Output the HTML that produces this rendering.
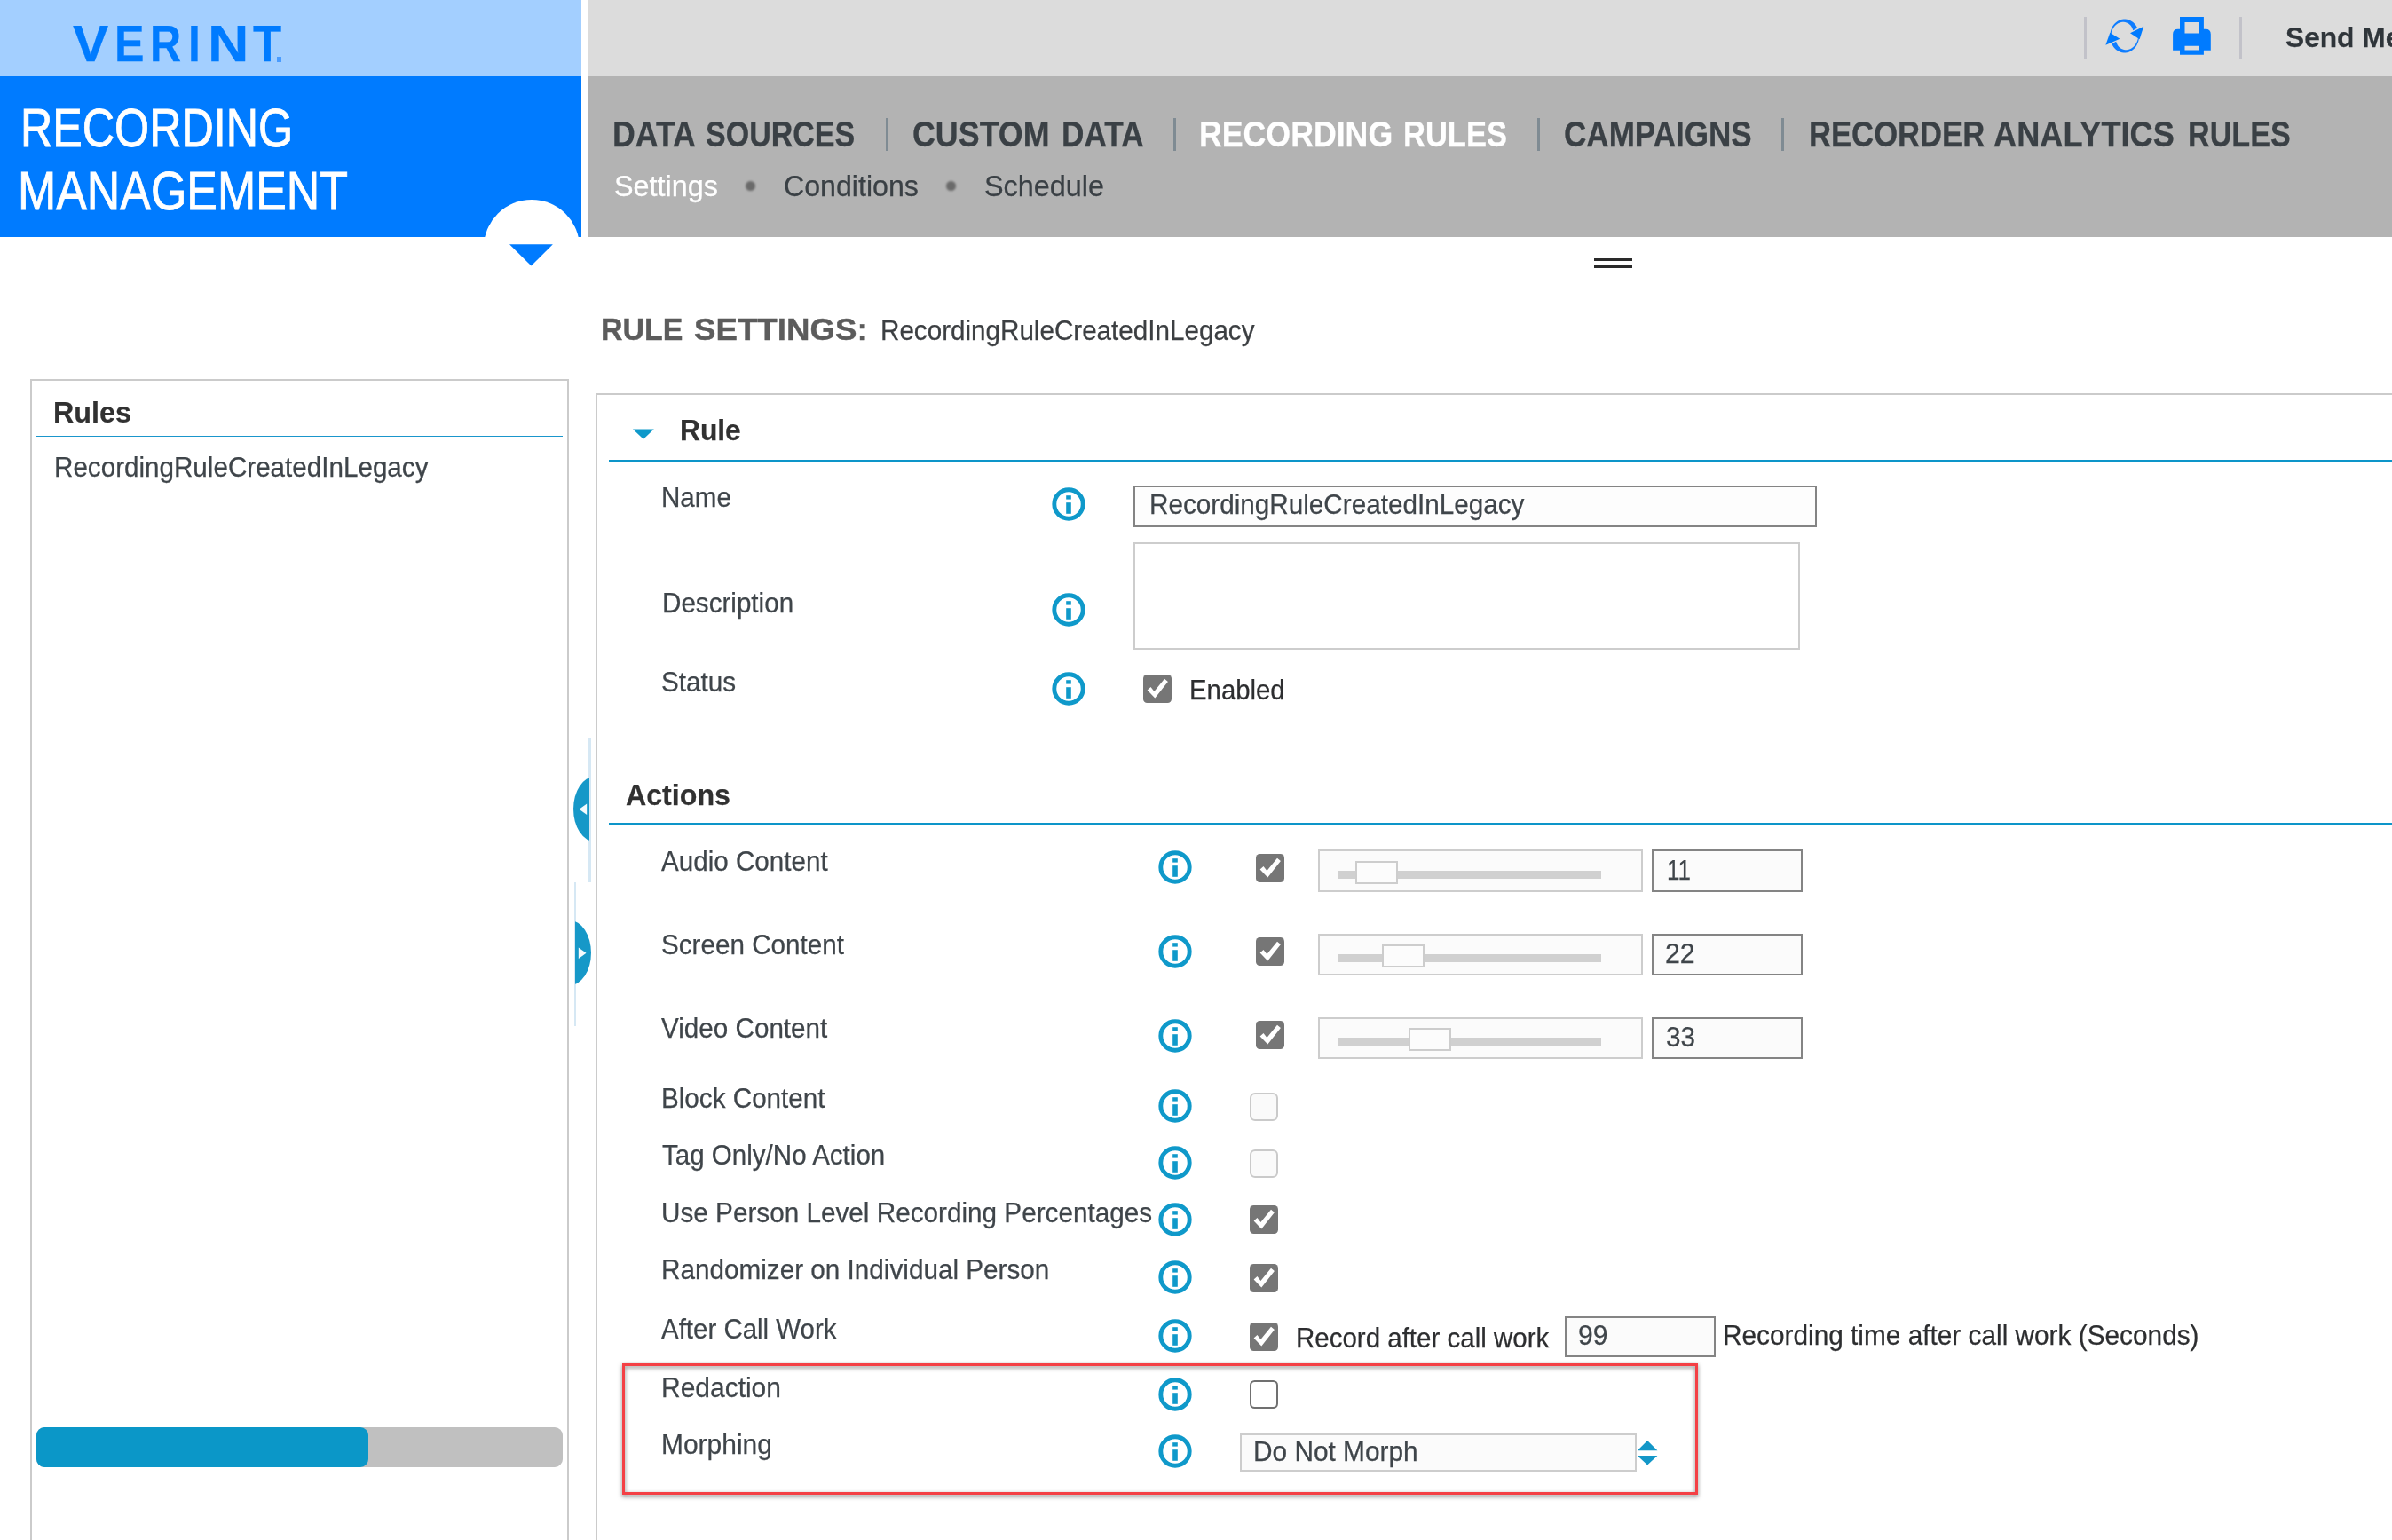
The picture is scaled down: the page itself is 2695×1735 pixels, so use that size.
<!DOCTYPE html>
<html lang="en">
<head>
<meta charset="utf-8">
<title>Recording Management - Recording Rules</title>
<style>
html,body{margin:0;padding:0;background:#fff;}
html{overflow:hidden;width:2695px;height:1735px;}
body{width:2695px;height:1735px;position:relative;overflow:hidden;font-family:"Liberation Sans",sans-serif;}
.a{position:absolute;}
.t{position:absolute;white-space:nowrap;transform-origin:0 0;-webkit-text-stroke:0.25px currentColor;}
.ln{position:absolute;background:#0d95c9;height:2.3px;}
.cb{position:absolute;width:32px;height:32px;border-radius:4.5px;background:#767676;}
.cb svg{position:absolute;left:0;top:0;}
.cbd{position:absolute;width:32px;height:32px;box-sizing:border-box;border:2px solid #cacaca;border-radius:6px;background:#fafafa;}
.cbe{position:absolute;width:32px;height:32px;box-sizing:border-box;border:2px solid #707070;border-radius:5.5px;background:#fff;}
.inp{position:absolute;box-sizing:border-box;border:2px solid #848484;background:#fbfbfb;}
.sl{position:absolute;box-sizing:border-box;border:2px solid #cdcdcd;background:#fbfbfb;}
.trk{position:absolute;background:#d0d0d0;height:8.9px;}
.th{position:absolute;box-sizing:border-box;width:47.8px;height:25.9px;border:2px solid #cdcdcd;background:#fcfcfc;}
.ii{position:absolute;width:38px;height:38px;filter:blur(.35px);}
</style>
</head>
<body>
<div id="app" style="position:absolute;left:0;top:0;width:2695px;height:1735px;overflow:hidden;contain:paint">


<!-- header: logo strip + module title -->
<div class="a" style="left:0;top:0;width:655px;height:86px;background:#a3cfff"></div>
<div class="a" style="left:0;top:86px;width:655px;height:181px;background:#007bff;overflow:hidden">
  <div class="a" style="left:544.7px;top:139px;width:108px;height:108px;border-radius:50%;background:#fff"></div>
</div>
<div class="a" style="left:311.8px;top:64.2px;width:5.7px;height:5.6px;background:#4a9cff"></div>
<svg class="a" style="left:570px;top:270px" width="60" height="36" viewBox="0 0 60 36"><path d="M4 5.3 L52.9 5.3 L28.5 29.5 Z" fill="#007bff"/></svg>

<!-- top utility bar -->
<div class="a" style="left:663px;top:0;width:2032px;height:86px;background:#dcdcdc"></div>
<div class="a" style="left:2347.5px;top:19px;width:3px;height:48px;background:#c2c2c9"></div>
<div class="a" style="left:2522.5px;top:19px;width:3px;height:48px;background:#c2c2c9"></div>
<!-- refresh icon -->
<svg class="a" style="left:2370px;top:17px;filter:blur(.55px)" width="48" height="48" viewBox="0 0 48 48">
  <path d="M7.4 25.2 L7.3 23.0 L7.5 20.8 L7.8 18.7 L8.4 16.6 L9.2 14.7 L10.1 12.8 L11.3 11.1 L12.6 9.5 L14.0 8.2 L15.6 7.0 L17.3 6.0 L19.0 5.3 L20.9 4.8 L22.7 4.5 L24.6 4.5 L26.5 4.8 L28.3 5.3 L30.0 6.0 L31.7 6.9 L33.3 8.1 L34.8 9.5 L36.1 11.0 L37.2 12.7 L38.2 14.6 L33.2 17.2 L32.8 15.8 L32.2 14.4 L31.5 13.0 L30.6 11.8 L29.6 10.7 L28.4 9.8 L27.2 9.0 L25.8 8.4 L24.4 8.0 L22.9 7.8 L21.4 7.8 L19.8 8.0 L18.3 8.4 L16.8 9.1 L15.3 9.9 L14.0 11.0 L12.7 12.3 L11.5 13.7 L10.5 15.4 L9.7 17.1 L9.0 19.0 L8.5 21.0 L8.3 23.0 L8.3 25.1 Z" fill="#0f7dff"/>
  <path d="M40.0 21.8 L40.1 24.0 L39.9 26.2 L39.6 28.3 L39.0 30.4 L38.2 32.3 L37.3 34.2 L36.1 35.9 L34.8 37.5 L33.4 38.8 L31.8 40.0 L30.1 41.0 L28.4 41.7 L26.5 42.2 L24.7 42.5 L22.8 42.5 L20.9 42.2 L19.1 41.7 L17.4 41.0 L15.7 40.1 L14.1 38.9 L12.6 37.5 L11.3 36.0 L10.2 34.3 L9.2 32.4 L14.2 29.8 L14.6 31.2 L15.2 32.6 L15.9 34.0 L16.8 35.2 L17.8 36.3 L19.0 37.2 L20.2 38.0 L21.6 38.6 L23.0 39.0 L24.5 39.2 L26.0 39.2 L27.6 39.0 L29.1 38.6 L30.6 37.9 L32.1 37.1 L33.4 36.0 L34.7 34.7 L35.9 33.3 L36.9 31.6 L37.7 29.9 L38.4 28.0 L38.9 26.0 L39.1 24.0 L39.1 21.9 Z" fill="#0f7dff"/>
  <path d="M30 20.3 L45.2 12.8 L40.6 27.2 Z" fill="#007bff"/>
  <path d="M18.4 26.7 L2.4 33.8 L7.3 19.8 Z" fill="#007bff"/>
</svg>
<!-- print icon -->
<svg class="a" style="left:2446px;top:17px" width="48" height="48" viewBox="0 0 48 48">
  <path fill="#007bff" fill-rule="evenodd" d="M10 2.1 H36.9 V15.8 H39 Q44.8 15.8 44.8 21.6 V39.8 H36.9 V44.8 H10 V39.8 H2.1 V21.6 Q2.1 15.8 7.9 15.8 H10 Z M15.5 7.9 V20.5 H31.3 V7.9 Z M15.5 34.8 V39.5 H31.3 V34.8 Z"/>
</svg>

<!-- navigation band -->
<div class="a" style="left:663px;top:86px;width:2032px;height:181px;background:#b3b3b3"></div>
<div class="a" style="left:998px;top:132.5px;width:3px;height:37px;background:#7f8b93"></div>
<div class="a" style="left:1322px;top:132.5px;width:3px;height:37px;background:#7f8b93"></div>
<div class="a" style="left:1732px;top:132.5px;width:3px;height:37px;background:#7f8b93"></div>
<div class="a" style="left:2007px;top:132.5px;width:3px;height:37px;background:#7f8b93"></div>
<div class="a" style="left:840px;top:204px;width:10.5px;height:10.5px;border-radius:50%;background:#6a6a6a;filter:blur(.8px)"></div>
<div class="a" style="left:1066px;top:204px;width:10.5px;height:10.5px;border-radius:50%;background:#6a6a6a;filter:blur(.8px)"></div>

<!-- collapse grip -->
<div class="a" style="left:1796px;top:291px;width:43px;height:3px;background:#2a2a2a"></div>
<div class="a" style="left:1796px;top:299px;width:43px;height:3px;background:#2a2a2a"></div>

<!-- left rules panel -->
<div class="a" style="left:34px;top:427px;width:607px;height:1400px;box-sizing:border-box;border:2px solid #cbcbcb;background:#fff"></div>
<div class="ln" style="left:41px;top:490.6px;width:593px;height:1.6px;background:#1a96cc"></div>
<div class="a" style="left:41px;top:1608.2px;width:593px;height:44.5px;border-radius:9px;background:#c0c0c0"></div>
<div class="a" style="left:41px;top:1608.2px;width:374px;height:44.5px;border-radius:9px;background:#0b97c8"></div>

<!-- splitter handles -->
<div class="a" style="left:663.2px;top:832px;width:2.4px;height:162px;background:#d6e8f4"></div>
<div class="a" style="left:646.4px;top:876.2px;width:17.8px;height:71px;overflow:hidden"><div class="a" style="left:0;top:-0.9px;width:48px;height:72.8px;border-radius:50%;background:#1698c8"></div></div>
<svg class="a" style="left:651px;top:904px" width="12" height="16" viewBox="0 0 12 16"><path d="M10.2 1.5 L10.2 14 L1.5 7.8 Z" fill="#f4fafd"/></svg>
<div class="a" style="left:646.7px;top:993.8px;width:2.4px;height:162px;background:#d6e8f4"></div>
<div class="a" style="left:648.2px;top:1038px;width:18.2px;height:71px;overflow:hidden"><div class="a" style="right:0;top:-0.9px;width:48px;height:72.8px;border-radius:50%;background:#1698c8"></div></div>
<svg class="a" style="left:649.5px;top:1066px" width="12" height="16" viewBox="0 0 12 16"><path d="M1.8 1.5 L1.8 14 L10.5 7.8 Z" fill="#f4fafd"/></svg>

<!-- main settings panel -->
<div class="a" style="left:671px;top:442.6px;width:2200px;height:1400px;box-sizing:border-box;border:2px solid #cbcbcb;background:#fff"></div>
<svg class="a" style="left:711px;top:480px" width="30" height="20" viewBox="0 0 30 20"><path d="M2 3.4 L25.8 3.4 L13.9 14.8 Z" fill="#0f99ca"/></svg>
<div class="ln" style="left:686px;top:517.8px;width:2020px;height:2.2px"></div>
<div class="ln" style="left:686px;top:926.8px;width:2020px;height:2.3px"></div>

<!-- rule section controls -->
<div class="inp" style="left:1277.3px;top:547.2px;width:769.6px;height:46.8px;background:#fdfdfd"></div>
<div class="a" style="left:1277.3px;top:611px;width:750.7px;height:121px;box-sizing:border-box;border:2px solid #cdcdcd;background:#fff"></div>
<div class="cb" style="left:1288.1px;top:760px"><svg width="32" height="32" viewBox="0 0 32 32"><path d="M4.6 17.6 L8.5 14 L12.4 19 L24 4.8 L27.9 8.1 L13.3 26.5 Z" fill="#fff"/></svg></div>

<!-- action rows: sliders -->
<div class="cb" style="left:1415px;top:962.1px"><svg width="32" height="32" viewBox="0 0 32 32"><path d="M4.6 17.6 L8.5 14 L12.4 19 L24 4.8 L27.9 8.1 L13.3 26.5 Z" fill="#fff"/></svg></div>
<div class="sl" style="left:1485.1px;top:957.0px;width:365.6px;height:47.85px"></div>
<div class="trk" style="left:1508.1px;top:981.1px;width:295.6px"></div>
<div class="th" style="left:1527.1px;top:970.1px"></div>
<div class="inp" style="left:1861.1px;top:957.0px;width:169.8px;height:47.85px"></div>

<div class="cb" style="left:1415px;top:1056.2px"><svg width="32" height="32" viewBox="0 0 32 32"><path d="M4.6 17.6 L8.5 14 L12.4 19 L24 4.8 L27.9 8.1 L13.3 26.5 Z" fill="#fff"/></svg></div>
<div class="sl" style="left:1485.1px;top:1052.0px;width:365.6px;height:46.90px"></div>
<div class="trk" style="left:1508.1px;top:1075.1px;width:295.6px"></div>
<div class="th" style="left:1556.9px;top:1064.1px"></div>
<div class="inp" style="left:1861.1px;top:1052.0px;width:169.8px;height:46.90px"></div>

<div class="cb" style="left:1415px;top:1150.3px"><svg width="32" height="32" viewBox="0 0 32 32"><path d="M4.6 17.6 L8.5 14 L12.4 19 L24 4.8 L27.9 8.1 L13.3 26.5 Z" fill="#fff"/></svg></div>
<div class="sl" style="left:1485.1px;top:1146.0px;width:365.6px;height:46.90px"></div>
<div class="trk" style="left:1508.1px;top:1169.3px;width:295.6px"></div>
<div class="th" style="left:1587.0px;top:1158.3px"></div>
<div class="inp" style="left:1861.1px;top:1146.0px;width:169.8px;height:46.90px"></div>

<!-- action rows: checkboxes -->
<div class="cbd" style="left:1408.2px;top:1231.1px"></div>
<div class="cbd" style="left:1408.2px;top:1295.1px"></div>
<div class="cb" style="left:1408.2px;top:1358px"><svg width="32" height="32" viewBox="0 0 32 32"><path d="M4.6 17.6 L8.5 14 L12.4 19 L24 4.8 L27.9 8.1 L13.3 26.5 Z" fill="#fff"/></svg></div>
<div class="cb" style="left:1408.2px;top:1423.9px"><svg width="32" height="32" viewBox="0 0 32 32"><path d="M4.6 17.6 L8.5 14 L12.4 19 L24 4.8 L27.9 8.1 L13.3 26.5 Z" fill="#fff"/></svg></div>
<div class="cb" style="left:1408.2px;top:1490.2px"><svg width="32" height="32" viewBox="0 0 32 32"><path d="M4.6 17.6 L8.5 14 L12.4 19 L24 4.8 L27.9 8.1 L13.3 26.5 Z" fill="#fff"/></svg></div>
<div class="inp" style="left:1763.3px;top:1482.6px;width:169.5px;height:46.2px"></div>

<!-- highlighted rows -->
<div class="a" style="left:701px;top:1536.2px;width:1211.9px;height:147.7px;box-sizing:border-box;border:3px solid #f44045;filter:drop-shadow(0 2.5px 2.5px rgba(0,0,0,.5))"></div>
<div class="cbe" style="left:1408.2px;top:1555.3px"></div>
<div class="sl" style="left:1397px;top:1615.4px;width:446.6px;height:42.2px"></div>
<svg class="a" style="left:1842px;top:1618px" width="30" height="38" viewBox="0 0 30 38"><path d="M2.8 16.2 L25.4 16.2 L14.1 5 Z M2.8 22 L25.4 22 L14.1 32.4 Z" fill="#1397c8"/></svg>

<!-- info icons -->
<svg class="ii" style="left:1185px;top:548.8px" viewBox="0 0 38 38"><circle cx="19" cy="19" r="16.2" fill="#fff" stroke="#0f99ca" stroke-width="4.9"/><rect x="16.2" y="9.2" width="5.6" height="4.4" fill="#0f99ca"/><rect x="16.2" y="17.2" width="5.6" height="12.6" fill="#0f99ca"/></svg>
<svg class="ii" style="left:1185px;top:667.6px" viewBox="0 0 38 38"><circle cx="19" cy="19" r="16.2" fill="#fff" stroke="#0f99ca" stroke-width="4.9"/><rect x="16.2" y="9.2" width="5.6" height="4.4" fill="#0f99ca"/><rect x="16.2" y="17.2" width="5.6" height="12.6" fill="#0f99ca"/></svg>
<svg class="ii" style="left:1185px;top:757.3px" viewBox="0 0 38 38"><circle cx="19" cy="19" r="16.2" fill="#fff" stroke="#0f99ca" stroke-width="4.9"/><rect x="16.2" y="9.2" width="5.6" height="4.4" fill="#0f99ca"/><rect x="16.2" y="17.2" width="5.6" height="12.6" fill="#0f99ca"/></svg>
<svg class="ii" style="left:1305.3px;top:958.4px" viewBox="0 0 38 38"><circle cx="19" cy="19" r="16.2" fill="#fff" stroke="#0f99ca" stroke-width="4.9"/><rect x="16.2" y="9.2" width="5.6" height="4.4" fill="#0f99ca"/><rect x="16.2" y="17.2" width="5.6" height="12.6" fill="#0f99ca"/></svg>
<svg class="ii" style="left:1305.3px;top:1053.2px" viewBox="0 0 38 38"><circle cx="19" cy="19" r="16.2" fill="#fff" stroke="#0f99ca" stroke-width="4.9"/><rect x="16.2" y="9.2" width="5.6" height="4.4" fill="#0f99ca"/><rect x="16.2" y="17.2" width="5.6" height="12.6" fill="#0f99ca"/></svg>
<svg class="ii" style="left:1305.3px;top:1147.5px" viewBox="0 0 38 38"><circle cx="19" cy="19" r="16.2" fill="#fff" stroke="#0f99ca" stroke-width="4.9"/><rect x="16.2" y="9.2" width="5.6" height="4.4" fill="#0f99ca"/><rect x="16.2" y="17.2" width="5.6" height="12.6" fill="#0f99ca"/></svg>
<svg class="ii" style="left:1305.3px;top:1226.5px" viewBox="0 0 38 38"><circle cx="19" cy="19" r="16.2" fill="#fff" stroke="#0f99ca" stroke-width="4.9"/><rect x="16.2" y="9.2" width="5.6" height="4.4" fill="#0f99ca"/><rect x="16.2" y="17.2" width="5.6" height="12.6" fill="#0f99ca"/></svg>
<svg class="ii" style="left:1305.3px;top:1290.5px" viewBox="0 0 38 38"><circle cx="19" cy="19" r="16.2" fill="#fff" stroke="#0f99ca" stroke-width="4.9"/><rect x="16.2" y="9.2" width="5.6" height="4.4" fill="#0f99ca"/><rect x="16.2" y="17.2" width="5.6" height="12.6" fill="#0f99ca"/></svg>
<svg class="ii" style="left:1305.3px;top:1354.8px" viewBox="0 0 38 38"><circle cx="19" cy="19" r="16.2" fill="#fff" stroke="#0f99ca" stroke-width="4.9"/><rect x="16.2" y="9.2" width="5.6" height="4.4" fill="#0f99ca"/><rect x="16.2" y="17.2" width="5.6" height="12.6" fill="#0f99ca"/></svg>
<svg class="ii" style="left:1305.3px;top:1419.9px" viewBox="0 0 38 38"><circle cx="19" cy="19" r="16.2" fill="#fff" stroke="#0f99ca" stroke-width="4.9"/><rect x="16.2" y="9.2" width="5.6" height="4.4" fill="#0f99ca"/><rect x="16.2" y="17.2" width="5.6" height="12.6" fill="#0f99ca"/></svg>
<svg class="ii" style="left:1305.3px;top:1485.7px" viewBox="0 0 38 38"><circle cx="19" cy="19" r="16.2" fill="#fff" stroke="#0f99ca" stroke-width="4.9"/><rect x="16.2" y="9.2" width="5.6" height="4.4" fill="#0f99ca"/><rect x="16.2" y="17.2" width="5.6" height="12.6" fill="#0f99ca"/></svg>
<svg class="ii" style="left:1305.3px;top:1552px" viewBox="0 0 38 38"><circle cx="19" cy="19" r="16.2" fill="#fff" stroke="#0f99ca" stroke-width="4.9"/><rect x="16.2" y="9.2" width="5.6" height="4.4" fill="#0f99ca"/><rect x="16.2" y="17.2" width="5.6" height="12.6" fill="#0f99ca"/></svg>
<svg class="ii" style="left:1305.3px;top:1616.3px" viewBox="0 0 38 38"><circle cx="19" cy="19" r="16.2" fill="#fff" stroke="#0f99ca" stroke-width="4.9"/><rect x="16.2" y="9.2" width="5.6" height="4.4" fill="#0f99ca"/><rect x="16.2" y="17.2" width="5.6" height="12.6" fill="#0f99ca"/></svg>

<div class="t" style="left:82.30px;top:21.10px;font-size:57.2px;line-height:57.2px;font-weight:700;color:#007bff;transform:scaleX(1.0526);">V</div>
<div class="t" style="left:129.16px;top:21.10px;font-size:57.2px;line-height:57.2px;font-weight:700;color:#007bff;transform:scaleX(0.8788);">E</div>
<div class="t" style="left:169.15px;top:21.10px;font-size:57.2px;line-height:57.2px;font-weight:700;color:#007bff;transform:scaleX(0.8500);">R</div>
<div class="t" style="left:211.89px;top:21.10px;font-size:57.2px;line-height:57.2px;font-weight:700;color:#007bff;transform:scaleX(0.8700);">I</div>
<div class="t" style="left:233.53px;top:21.10px;font-size:57.2px;line-height:57.2px;font-weight:700;color:#007bff;transform:scaleX(1.1229);">N</div>
<div class="t" style="left:285.30px;top:21.10px;font-size:57.2px;line-height:57.2px;font-weight:700;color:#007bff;transform:scaleX(0.9200);">T</div>
<div class="t" style="left:22.72px;top:113.05px;font-size:61.5px;line-height:61.5px;font-weight:400;color:#ffffff;transform:scaleX(0.8169);-webkit-text-stroke:0.9px #fff;">RECORDING</div>
<div class="t" style="left:19.95px;top:185.30px;font-size:61.0px;line-height:61.0px;font-weight:400;color:#ffffff;transform:scaleX(0.8507);-webkit-text-stroke:0.9px #fff;">MANAGEMENT</div>
<div class="t" style="left:690.21px;top:130.70px;font-size:40px;line-height:40px;font-weight:700;color:#3a4045;transform:scaleX(0.8927);">DATA</div>
<div class="t" style="left:795.35px;top:130.70px;font-size:40px;line-height:40px;font-weight:700;color:#3a4045;transform:scaleX(0.8504);">SOURCES</div>
<div class="t" style="left:1028.10px;top:130.70px;font-size:40px;line-height:40px;font-weight:700;color:#3a4045;transform:scaleX(0.8956);">CUSTOM</div>
<div class="t" style="left:1195.54px;top:130.70px;font-size:40px;line-height:40px;font-weight:700;color:#3a4045;transform:scaleX(0.8810);">DATA</div>
<div class="t" style="left:1351.22px;top:130.70px;font-size:40px;line-height:40px;font-weight:700;color:#ffffff;transform:scaleX(0.8925);">RECORDING</div>
<div class="t" style="left:1581.27px;top:130.70px;font-size:40px;line-height:40px;font-weight:700;color:#ffffff;transform:scaleX(0.8631);">RULES</div>
<div class="t" style="left:1762.32px;top:130.70px;font-size:40px;line-height:40px;font-weight:700;color:#3a4045;transform:scaleX(0.8765);">CAMPAIGNS</div>
<div class="t" style="left:2037.87px;top:130.70px;font-size:40px;line-height:40px;font-weight:700;color:#3a4045;transform:scaleX(0.8660);">RECORDER</div>
<div class="t" style="left:2246.09px;top:130.70px;font-size:40px;line-height:40px;font-weight:700;color:#3a4045;transform:scaleX(0.9055);">ANALYTICS</div>
<div class="t" style="left:2464.69px;top:130.70px;font-size:40px;line-height:40px;font-weight:700;color:#3a4045;transform:scaleX(0.8534);">RULES</div>
<div class="t" style="left:692.31px;top:194.15px;font-size:32.7px;line-height:32.7px;font-weight:400;color:#ffffff;transform:scaleX(0.9892);">Settings</div>
<div class="t" style="left:883.02px;top:194.15px;font-size:32.7px;line-height:32.7px;font-weight:400;color:#3a4045;transform:scaleX(0.9830);">Conditions</div>
<div class="t" style="left:1108.81px;top:194.15px;font-size:32.7px;line-height:32.7px;font-weight:400;color:#3a4045;transform:scaleX(0.9901);">Schedule</div>
<div class="t" style="left:2575.20px;top:25.70px;font-size:32px;line-height:32px;font-weight:700;color:#2f353a;transform:scaleX(0.9900);">Send Message</div>
<div class="t" style="left:677.43px;top:353.85px;font-size:34.5px;line-height:34.5px;font-weight:700;color:#5c5c5c;transform:scaleX(0.9835);-webkit-text-stroke:0.4px #5c5c5c;">RULE</div>
<div class="t" style="left:782.04px;top:353.85px;font-size:34.5px;line-height:34.5px;font-weight:700;color:#5c5c5c;transform:scaleX(1.0631);-webkit-text-stroke:0.4px #5c5c5c;">SETTINGS:</div>
<div class="t" style="left:991.75px;top:355.80px;font-size:32px;line-height:32px;font-weight:400;color:#3c3f42;transform:scaleX(0.9255);">RecordingRuleCreatedInLegacy</div>
<div class="t" style="left:60.31px;top:448.55px;font-size:32.5px;line-height:32.5px;font-weight:700;color:#313131;transform:scaleX(0.9938);">Rules</div>
<div class="t" style="left:61.29px;top:511.20px;font-size:31px;line-height:31px;font-weight:400;color:#3f454a;transform:scaleX(0.9553);">RecordingRuleCreatedInLegacy</div>
<div class="t" style="left:765.68px;top:467.90px;font-size:33px;line-height:33px;font-weight:700;color:#313131;transform:scaleX(0.9616);">Rule</div>
<div class="t" style="left:745.25px;top:543.90px;font-size:32px;line-height:32px;font-weight:400;color:#3f454a;transform:scaleX(0.9241);">Name</div>
<div class="t" style="left:745.55px;top:662.70px;font-size:32px;line-height:32px;font-weight:400;color:#3f454a;transform:scaleX(0.9253);">Description</div>
<div class="t" style="left:745.37px;top:752.00px;font-size:32px;line-height:32px;font-weight:400;color:#3f454a;transform:scaleX(0.9277);">Status</div>
<div class="t" style="left:1295.34px;top:551.90px;font-size:32px;line-height:32px;font-weight:400;color:#3f454a;transform:scaleX(0.9277);">RecordingRuleCreatedInLegacy</div>
<div class="t" style="left:1339.87px;top:760.70px;font-size:32px;line-height:32px;font-weight:400;color:#2d2e30;transform:scaleX(0.9169);">Enabled</div>
<div class="t" style="left:705.00px;top:878.75px;font-size:33.5px;line-height:33.5px;font-weight:700;color:#313131;transform:scaleX(0.9598);">Actions</div>
<div class="t" style="left:745.20px;top:953.80px;font-size:32px;line-height:32px;font-weight:400;color:#3f454a;transform:scaleX(0.9250);">Audio Content</div>
<div class="t" style="left:744.77px;top:1047.70px;font-size:32px;line-height:32px;font-weight:400;color:#3f454a;transform:scaleX(0.9261);">Screen Content</div>
<div class="t" style="left:745.20px;top:1141.70px;font-size:32px;line-height:32px;font-weight:400;color:#3f454a;transform:scaleX(0.9261);">Video Content</div>
<div class="t" style="left:1877.53px;top:965.00px;font-size:31px;line-height:31px;font-weight:400;color:#3f454a;transform:scaleX(0.8362);">11</div>
<div class="t" style="left:1876.02px;top:1059.00px;font-size:31px;line-height:31px;font-weight:400;color:#3f454a;transform:scaleX(0.9770);">22</div>
<div class="t" style="left:1876.74px;top:1152.90px;font-size:31px;line-height:31px;font-weight:400;color:#3f454a;transform:scaleX(0.9553);">33</div>
<div class="t" style="left:744.85px;top:1221.00px;font-size:32px;line-height:32px;font-weight:400;color:#3f454a;transform:scaleX(0.9264);">Block Content</div>
<div class="t" style="left:745.60px;top:1284.90px;font-size:32px;line-height:32px;font-weight:400;color:#3f454a;transform:scaleX(0.9232);">Tag Only/No Action</div>
<div class="t" style="left:744.84px;top:1349.90px;font-size:32px;line-height:32px;font-weight:400;color:#3f454a;transform:scaleX(0.9282);">Use Person Level Recording Percentages</div>
<div class="t" style="left:745.34px;top:1413.90px;font-size:32px;line-height:32px;font-weight:400;color:#3f454a;transform:scaleX(0.9278);">Randomizer on Individual Person</div>
<div class="t" style="left:745.30px;top:1480.70px;font-size:32px;line-height:32px;font-weight:400;color:#3f454a;transform:scaleX(0.9204);">After Call Work</div>
<div class="t" style="left:744.53px;top:1546.60px;font-size:32px;line-height:32px;font-weight:400;color:#3f454a;transform:scaleX(0.9366);">Redaction</div>
<div class="t" style="left:744.53px;top:1611.20px;font-size:32px;line-height:32px;font-weight:400;color:#3f454a;transform:scaleX(0.9359);">Morphing</div>
<div class="t" style="left:1459.66px;top:1490.80px;font-size:32px;line-height:32px;font-weight:400;color:#2d2e30;transform:scaleX(0.9217);">Record after call work</div>
<div class="t" style="left:1778.33px;top:1488.90px;font-size:31px;line-height:31px;font-weight:400;color:#3f454a;transform:scaleX(0.9708);">99</div>
<div class="t" style="left:1941.34px;top:1488.10px;font-size:32px;line-height:32px;font-weight:400;color:#2d2e30;transform:scaleX(0.9311);">Recording time after call work (Seconds)</div>
<div class="t" style="left:1412.08px;top:1620.30px;font-size:31px;line-height:31px;font-weight:400;color:#3f454a;transform:scaleX(0.9619);">Do Not Morph</div>
</div>
</body>
</html>
